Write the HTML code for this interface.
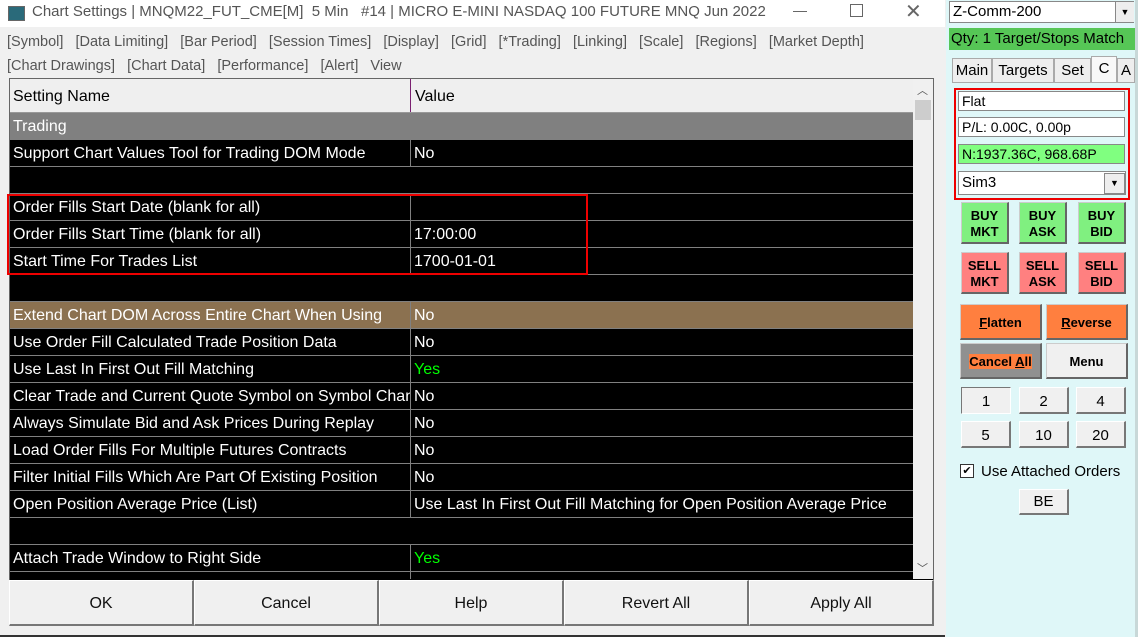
<!DOCTYPE html><html><head><style>
body{margin:0;width:1138px;height:637px;overflow:hidden;background:#f0f0f0;font-family:"Liberation Sans",sans-serif;position:relative}
.a{position:absolute}
.t{font-size:15px;color:#555}
.m{font-size:14.5px;color:#555;white-space:pre}
.row{position:absolute;left:10px;width:903px;height:26px;border-bottom:1px solid #808080;background:#000;color:#fff;font-size:16px;line-height:28px}
.row .n{position:absolute;left:3px;width:397px;overflow:hidden;white-space:nowrap}
.row .v{position:absolute;left:400px;top:0;height:26px;border-left:1px solid #808080;padding-left:3px;white-space:nowrap;width:498px;overflow:hidden}
.g{color:#0f0}
.btn{position:absolute;top:580px;height:43px;width:182px;background:#f0f0f0;border:1px solid #fff;border-right:2px solid #777;border-bottom:2px solid #777;font-size:16px;text-align:center;line-height:45px;color:#111}
.rp{position:absolute;left:946px;top:0;width:192px;height:637px;background:#dff7f8}
.wb{position:absolute;background:#fff;border:1px solid #888;font-size:14px;line-height:18px;padding-left:3px;color:#000;box-sizing:border-box;height:20px}
.tb{position:absolute;width:48px;height:42px;font:bold 13px "Liberation Sans",sans-serif;text-align:center;line-height:16px;padding-top:5px;box-sizing:border-box;border:1px solid #ccc;border-right:2px solid #666;border-bottom:2px solid #666}
.nb{position:absolute;width:50px;height:27px;background:#f0f0f0;border:1px solid #fff;border-right:2px solid #777;border-bottom:2px solid #777;font-size:15px;text-align:center;line-height:27px;box-sizing:border-box}
</style></head><body>
<div class="a" style="left:0;top:0;width:945px;height:27px;background:#fff"></div>
<div class="a" style="left:8px;top:6px;width:15px;height:13px;background:#2a6a7a;border:1px solid #666"></div>
<div class="a t" style="left:32px;top:3px;white-space:pre">Chart Settings | MNQM22_FUT_CME[M]  5 Min   #14 | MICRO E-MINI NASDAQ 100 FUTURE MNQ Jun 2022</div>
<div class="a" style="left:793px;top:11px;width:14px;height:1px;background:#666"></div>
<div class="a" style="left:850px;top:4px;width:11px;height:11px;border:1px solid #666"></div>
<div class="a" style="left:905px;top:-1px;font-size:20px;color:#666">✕</div>
<div class="a m" style="left:7px;top:34px">[Symbol]   [Data Limiting]   [Bar Period]   [Session Times]   [Display]   [Grid]   [*Trading]   [Linking]   [Scale]   [Regions]   [Market Depth]</div>
<div class="a m" style="left:7px;top:58px">[Chart Drawings]   [Chart Data]   [Performance]   [Alert]   View</div>
<div class="a" style="left:9px;top:78px;width:923px;height:501px;border:1px solid #666;background:#000"></div>
<div class="a" style="left:10px;top:79px;width:903px;height:33px;background:#efefef;border-bottom:1px solid #999;font-size:16px;line-height:35px"><span style="margin-left:3px">Setting Name</span><span class="a" style="left:400px;top:0;height:33px;border-left:1px solid #7a2070;padding-left:4px">Value</span></div>
<div class="a" style="left:913px;top:79px;width:20px;height:500px;background:#f0f0f0"></div>
<div class="a" style="left:915px;top:100px;width:16px;height:20px;background:#cdcdcd"></div>
<div class="a" style="left:917px;top:82px;font-size:11px;color:#555">︿</div>
<div class="a" style="left:917px;top:560px;font-size:11px;color:#555">﹀</div>
<div class="row" style="top:113px;background:#808080"><span class="n">Trading</span></div>
<div class="row" style="top:140px"><span class="n">Support Chart Values Tool for Trading DOM Mode</span><span class="v">No</span></div>
<div class="row" style="top:167px"></div>
<div class="row" style="top:194px"><span class="n">Order Fills Start Date (blank for all)</span><span class="v"></span></div>
<div class="row" style="top:221px"><span class="n">Order Fills Start Time (blank for all)</span><span class="v">17:00:00</span></div>
<div class="row" style="top:248px"><span class="n">Start Time For Trades List</span><span class="v">1700-01-01</span></div>
<div class="row" style="top:275px"></div>
<div class="row" style="top:302px;background:#8b7150"><span class="n">Extend Chart DOM Across Entire Chart When Using</span><span class="v">No</span></div>
<div class="row" style="top:329px"><span class="n">Use Order Fill Calculated Trade Position Data</span><span class="v">No</span></div>
<div class="row" style="top:356px"><span class="n">Use Last In First Out Fill Matching</span><span class="v g">Yes</span></div>
<div class="row" style="top:383px"><span class="n">Clear Trade and Current Quote Symbol on Symbol Change</span><span class="v">No</span></div>
<div class="row" style="top:410px"><span class="n">Always Simulate Bid and Ask Prices During Replay</span><span class="v">No</span></div>
<div class="row" style="top:437px"><span class="n">Load Order Fills For Multiple Futures Contracts</span><span class="v">No</span></div>
<div class="row" style="top:464px"><span class="n">Filter Initial Fills Which Are Part Of Existing Position</span><span class="v">No</span></div>
<div class="row" style="top:491px"><span class="n">Open Position Average Price (List)</span><span class="v">Use Last In First Out Fill Matching for Open Position Average Price</span></div>
<div class="row" style="top:518px"></div>
<div class="row" style="top:545px"><span class="n">Attach Trade Window to Right Side</span><span class="v g">Yes</span></div>
<div class="row" style="top:572px;height:7px;border:0"><span class="v" style="height:7px"></span></div>
<div class="a" style="left:7px;top:194px;width:577px;height:77px;border:2px solid #e00"></div>
<div class="btn" style="left:9px">OK</div>
<div class="btn" style="left:194px">Cancel</div>
<div class="btn" style="left:379px">Help</div>
<div class="btn" style="left:564px">Revert All</div>
<div class="btn" style="left:749px">Apply All</div>
<div class="a" style="left:0;top:635px;width:945px;height:2px;background:#333"></div>
<div class="rp">
<div class="wb" style="left:3px;top:1px;width:185px;height:22px;font-size:15px;line-height:20px">Z-Comm-200</div>
<div class="a" style="left:169px;top:2px;width:18px;height:20px;background:#eee;border-left:1px solid #888;font-size:9px;text-align:center;line-height:20px">▼</div>
<div class="a" style="left:3px;top:28px;width:189px;height:22px;background:#56c656;font-size:15px;line-height:22px;padding-left:2px">Qty: 1 Target/Stops Match</div>
<div class="a" style="left:6px;top:58px;width:38px;height:23px;background:#eee;border:1px solid #aaa;font-size:15px;line-height:23px;text-align:center">Main</div>
<div class="a" style="left:46px;top:58px;width:60px;height:23px;background:#eee;border:1px solid #aaa;font-size:15px;line-height:23px;text-align:center">Targets</div>
<div class="a" style="left:108px;top:58px;width:35px;height:23px;background:#eee;border:1px solid #aaa;font-size:15px;line-height:23px;text-align:center">Set</div>
<div class="a" style="left:145px;top:56px;width:24px;height:25px;background:#f8f8f8;border:1px solid #aaa;font-size:15px;line-height:23px;text-align:center">C</div>
<div class="a" style="left:171px;top:58px;width:16px;height:23px;background:#eee;border:1px solid #aaa;font-size:15px;line-height:23px;text-align:center">A</div>
<div class="a" style="left:8px;top:88px;width:172px;height:108px;border:2px solid #e00"></div>
<div class="wb" style="left:12px;top:91px;width:167px">Flat</div>
<div class="wb" style="left:12px;top:117px;width:167px">P/L: 0.00C, 0.00p</div>
<div class="wb" style="left:12px;top:144px;width:167px;background:#80ff80">N:1937.36C, 968.68P</div>
<div class="wb" style="left:12px;top:171px;width:168px;height:24px;font-size:15px;line-height:22px">Sim3</div>
<div class="a" style="left:158px;top:173px;width:19px;height:19px;background:#eee;border:1px solid #888;font-size:9px;text-align:center;line-height:19px">▼</div>
<div class="tb" style="left:15px;top:202px;background:#80f080">BUY<br>MKT</div>
<div class="tb" style="left:73px;top:202px;background:#80f080">BUY<br>ASK</div>
<div class="tb" style="left:132px;top:202px;background:#80f080">BUY<br>BID</div>
<div class="tb" style="left:15px;top:252px;background:#ff8080">SELL<br>MKT</div>
<div class="tb" style="left:73px;top:252px;background:#ff8080">SELL<br>ASK</div>
<div class="tb" style="left:132px;top:252px;background:#ff8080">SELL<br>BID</div>
<div class="tb" style="left:14px;top:304px;width:82px;height:36px;background:#ff7f3f;padding-top:10px"><u>F</u>latten</div>
<div class="tb" style="left:100px;top:304px;width:82px;height:36px;background:#ff7f3f;padding-top:10px"><u>R</u>everse</div>
<div class="tb" style="left:14px;top:343px;width:82px;height:36px;background:#909090;padding-top:10px"><span style="background:#ff7f3f">Cancel <u>A</u>ll</span></div>
<div class="tb" style="left:100px;top:343px;width:82px;height:36px;background:#f0f0f0;padding-top:10px">Menu</div>
<div class="nb" style="left:15px;top:387px;border:1px solid #777;border-right:1px solid #fff;border-bottom:1px solid #fff">1</div>
<div class="nb" style="left:73px;top:387px">2</div>
<div class="nb" style="left:130px;top:387px">4</div>
<div class="nb" style="left:15px;top:421px">5</div>
<div class="nb" style="left:73px;top:421px">10</div>
<div class="nb" style="left:130px;top:421px">20</div>
<div class="a" style="left:14px;top:464px;width:12px;height:12px;background:#fff;border:1px solid #333;font-size:11px;line-height:12px;text-align:center">✔</div>
<div class="a" style="left:35px;top:463px;font-size:15px">Use Attached Orders</div>
<div class="nb" style="left:73px;top:489px;height:26px;line-height:24px">BE</div>
<div class="a" style="left:189px;top:0;width:3px;height:637px;background:#c8d8d8"></div>
</div>
</body></html>
